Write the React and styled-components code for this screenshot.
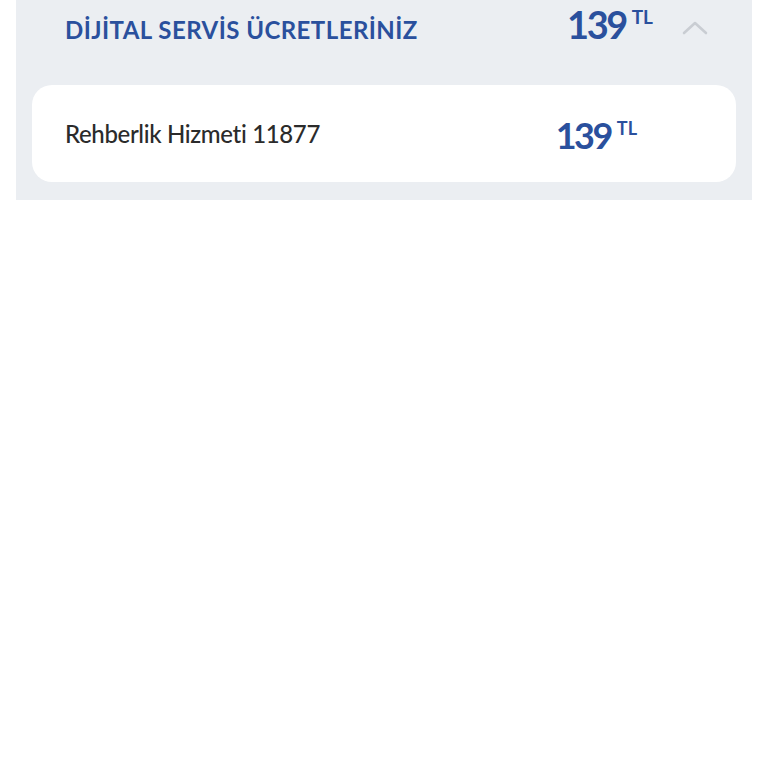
import React from 'react'
import styled, { createGlobalStyle } from 'styled-components'

const GlobalStyle = createGlobalStyle`
  body {
    margin: 0;
    background: #fff;
    font-family: Lato, "Open Sans", sans-serif;
  }
`

const Panel = styled.section`
  margin: 0 16px;
  background-color: #ebeef2;
  padding-bottom: 18px;
`

const Header = styled.div`
  display: flex;
  align-items: center;
  height: 58px;
  padding: 0 44px 0 49px;
  margin-bottom: 27px;
`

const Title = styled.h2`
  flex: 1;
  margin: 0;
  font-size: 24px;
  font-weight: 700;
  color: #2a509d;
  letter-spacing: 0.45px;
`

const Price = styled.div`
  display: flex;
  align-items: flex-start;
  margin-top: ${p => p.$shift || 0}px;
  color: #2a509d;
  font-weight: 700;
`

const Amount = styled.span`
  font-size: ${p => p.$size}px;
  line-height: 1;
  letter-spacing: -2.5px;
`

const Currency = styled.span`
  font-size: ${p => p.$size}px;
  line-height: 1;
  margin-left: 6px;
  margin-top: 2px;
`

const Chevron = styled.svg`
  width: 26px;
  height: 16px;
  margin-left: 29px;
  margin-top: -2px;
`

const Card = styled.div`
  display: flex;
  align-items: center;
  height: 97px;
  margin: 0 16px;
  padding: 0 99px 0 33px;
  background: #fff;
  border-radius: 20px;
`

const Label = styled.div`
  flex: 1;
  font-size: 24px;
  font-weight: 500;
  color: #2b2b2b;
  letter-spacing: -0.35px;
`

export default function App() {
  return (
    <>
      <GlobalStyle />
      <Panel>
        <Header>
          <Title>DİJİTAL SERVİS ÜCRETLERİNİZ</Title>
          <Price $shift={-10}>
            <Amount $size={38}>139</Amount>
            <Currency $size={19}>TL</Currency>
          </Price>
          <Chevron viewBox="0 0 26 16" fill="none">
            <path d="M2 13 L13 3 L24 13" stroke="#c9cdd3" strokeWidth="2.6" strokeLinecap="round" strokeLinejoin="round" />
          </Chevron>
        </Header>
        <Card>
          <Label>Rehberlik Hizmeti 11877</Label>
          <Price $shift={2}>
            <Amount $size={36}>139</Amount>
            <Currency $size={18}>TL</Currency>
          </Price>
        </Card>
      </Panel>
    </>
  )
}
